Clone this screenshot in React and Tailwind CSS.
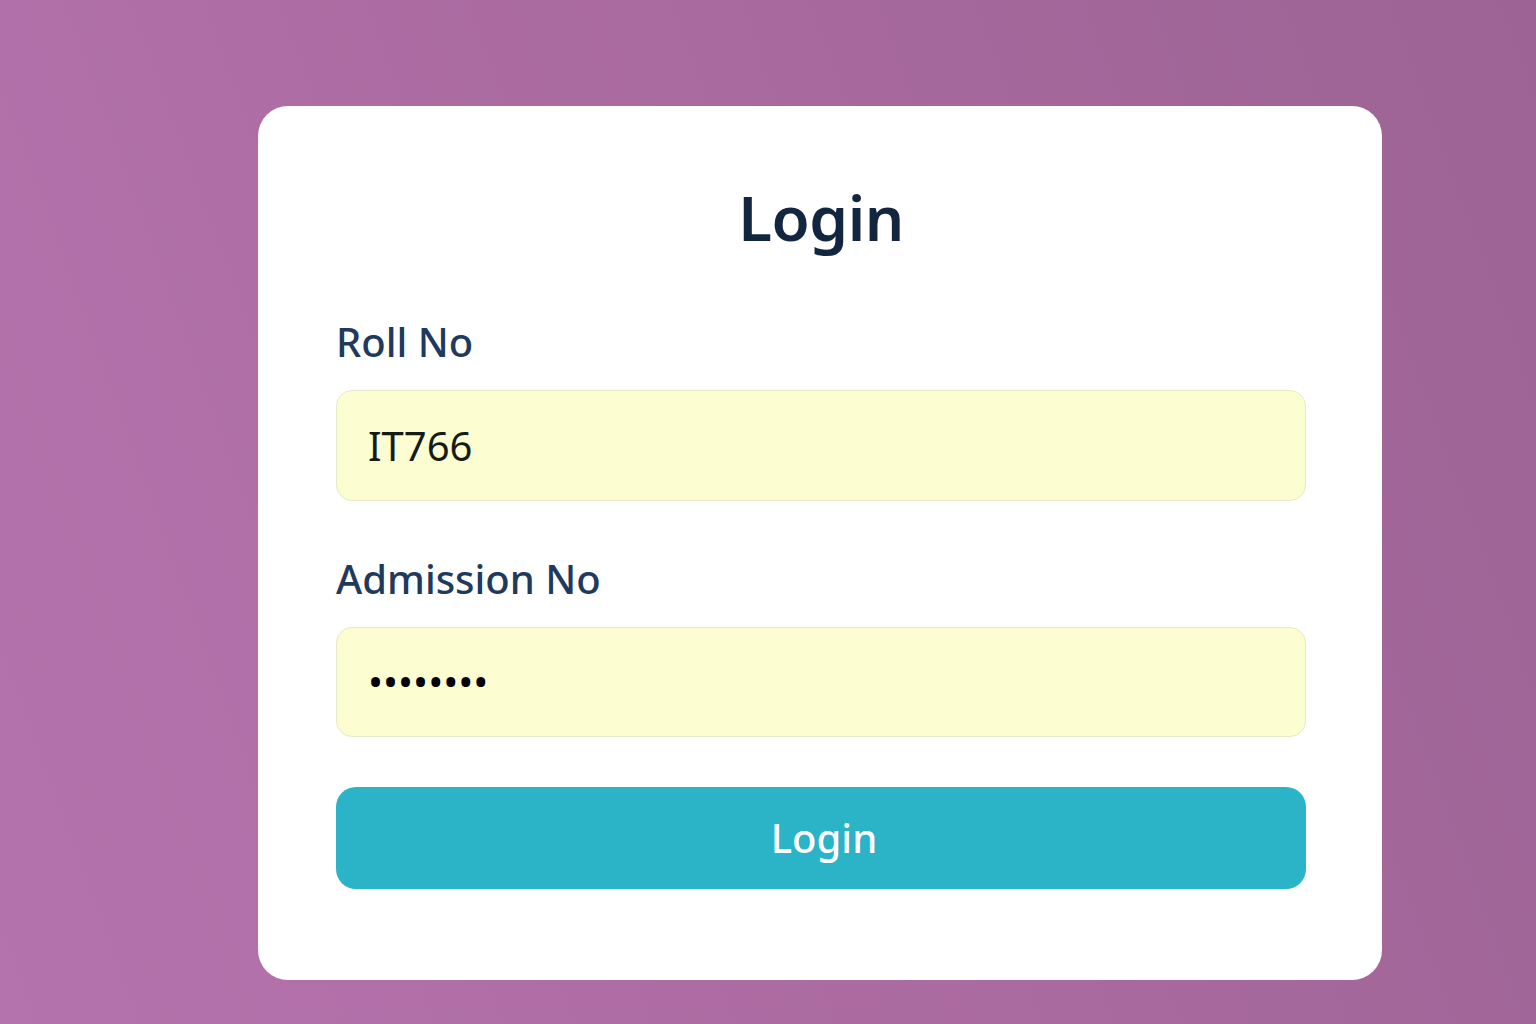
export default function App() {
  return (
    <div
      className="min-h-screen w-full bg-[linear-gradient(250deg,#9c6394_0%,#a96a9f_45%,#b573ad_100%)] pt-[106px] pb-[45px] pl-[258px]"
      style={{ fontFamily: '"Noto Sans", "Open Sans", sans-serif' }}
    >
      <div className="w-[1124px] rounded-[30px] bg-white pl-[78px] pr-[76px] pt-[80px] pb-[91px]">
        <h1 className="text-center text-[62px] leading-none font-semibold tracking-[-0.5px] text-[#132640]">
          Login
        </h1>
        <label className="mt-[74px] block text-[40px] leading-none font-medium text-[#1f3a5c]">
          Roll No
        </label>
        <div className="mt-[28px] flex h-[111px] items-center rounded-[16px] border border-[#e6ebc7] bg-[#fcfed2] px-[31px]">
          <input
            readOnly
            value="IT766"
            className="w-full bg-transparent text-[40px] leading-none text-[#141c18] outline-none"
          />
        </div>
        <label className="mt-[58px] block text-[40px] leading-none font-medium text-[#1f3a5c]">
          Admission No
        </label>
        <div className="mt-[28px] flex h-[110px] items-center rounded-[16px] border border-[#e6ebc7] bg-[#fcfed2] px-[31px]">
          <span className="text-[40px] leading-none text-black">••••••••</span>
        </div>
        <button className="mt-[50px] flex h-[102px] w-full items-center justify-center rounded-[20px] bg-[#2bb3c7] pl-[6px] text-[40px] leading-none font-medium text-white">
          Login
        </button>
      </div>
    </div>
  );
}
